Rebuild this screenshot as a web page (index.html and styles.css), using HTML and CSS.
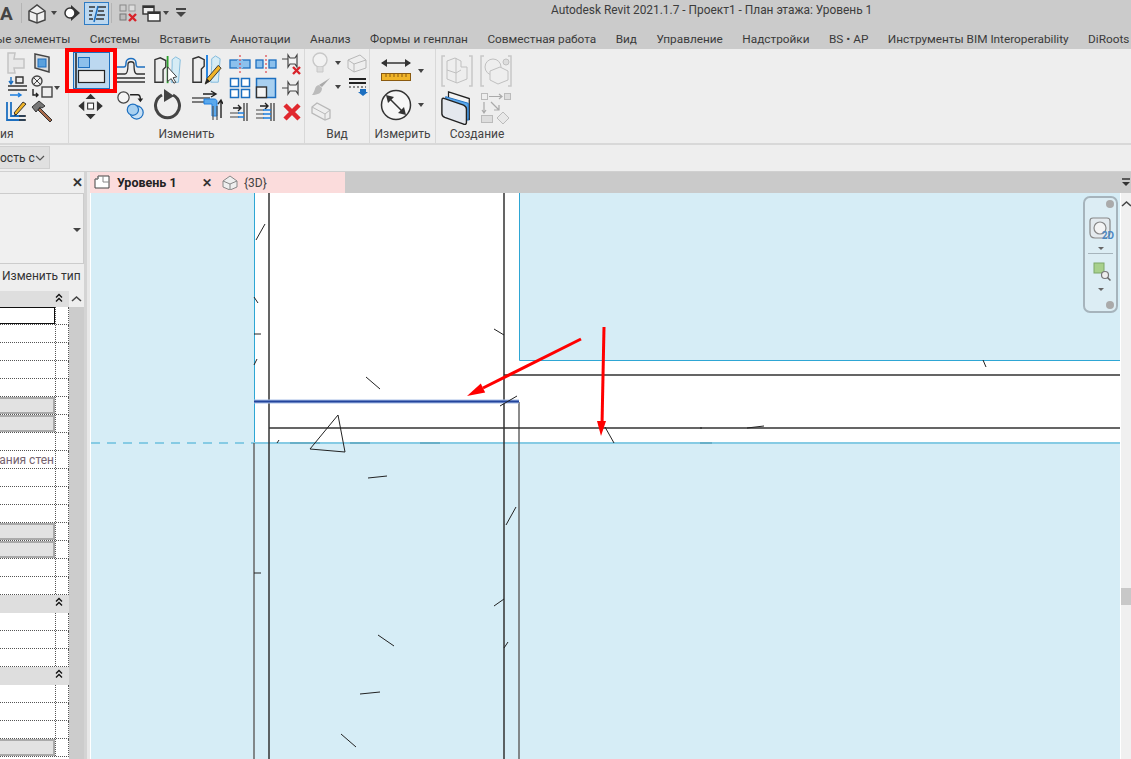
FILE: index.html
```html
<!DOCTYPE html>
<html lang="ru">
<head>
    <meta charset="UTF-8">
    <meta name="viewport" content="width=device-width, initial-scale=1.0">
    <title>Autodesk Revit 2021.1.7 - Проект1 - План этажа: Уровень 1</title>
    <link rel="stylesheet" href="styles.css">
</head>
<body>
    <!-- Title bar -->
    <div class="titlebar">
        <div class="qat">
            <span class="logo">A</span>
            <span class="qat-sep"></span>
            <svg class="qat-home" width="20" height="22" viewBox="0 0 20 22"><path d="M2 9l8-6 8 6v9l-8 3-8-3z" fill="#f0f0f0" stroke="#444" stroke-width="1.5"/><path d="M2 9l8 3 8-3M10 12v9" fill="none" stroke="#444" stroke-width="1.3"/></svg>
            <span class="caret qat-caret"></span>
            <svg class="qat-sync" width="20" height="22" viewBox="0 0 20 22"><path d="M10 3l9 8-9 8z" fill="#333"/><circle cx="9" cy="11" r="5" fill="#fff" stroke="#333" stroke-width="1.5"/></svg>
            <span class="qat-active">
                <svg width="24" height="22" viewBox="0 0 24 22"><path d="M4 4h6M4 8h4M4 12h3M4 16h4M13 4h8M13 8h6M12 12h8M11 16h8" stroke="#333" stroke-width="1.5"/><path d="M13 3l-4 16" stroke="#1c6fc0" stroke-width="1.5"/></svg>
            </span>
            <span class="qat-sep qat-sep-2"></span>
            <svg class="qat-close" width="20" height="20" viewBox="0 0 20 20"><rect x="2" y="2" width="6" height="6" fill="#ccc" stroke="#888"/><rect x="11" y="2" width="6" height="6" fill="#ddd" stroke="#999"/><rect x="2" y="11" width="6" height="6" fill="#bbb" stroke="#777"/><path d="M11 11l7 7M18 11l-7 7" stroke="#d8232a" stroke-width="2.4"/></svg>
            <svg class="qat-windows" width="20" height="20" viewBox="0 0 20 20"><rect x="1" y="3" width="11" height="8" fill="#eee" stroke="#333" stroke-width="1.4"/><rect x="6" y="9" width="12" height="9" fill="#fff" stroke="#333" stroke-width="1.4"/><path d="M1 4h11M6 10h12" stroke="#333" stroke-width="2"/></svg>
            <span class="caret qat-caret-2"></span>
            <svg class="qat-more" width="12" height="12" viewBox="0 0 12 12"><path d="M1 2h10" stroke="#444" stroke-width="2"/><path d="M1 5h10l-5 5z" fill="#444"/></svg>
        </div>
        <span class="app-title">Autodesk Revit 2021.1.7 - Проект1 - План этажа: Уровень 1</span>
    </div>

    <!-- Ribbon tabs -->
    <div class="ribbon-tabs">
        <span class="tab-first">ые элементы</span>
        <span>Системы</span>
        <span>Вставить</span>
        <span>Аннотации</span>
        <span>Анализ</span>
        <span>Формы и генплан</span>
        <span>Совместная работа</span>
        <span>Вид</span>
        <span>Управление</span>
        <span>Надстройки</span>
        <span>BS • AP</span>
        <span>Инструменты BIM Interoperability</span>
        <span>DiRoots</span>
    </div>

    <!-- Ribbon -->
    <div class="ribbon">
        <section class="panel panel-geometry">
            <div class="panel-body tool-grid tool-grid-geometry">
                <svg width="24" height="24" viewBox="0 0 24 24"><path d="M4 2h7l-1 6h10v9H10l1 5H4z" fill="#e8e8e8" stroke="#c4c4c4" stroke-width="1.5"/></svg>
                <svg width="24" height="24" viewBox="0 0 24 24"><path d="M5 3l14 3v15L5 17z" fill="#ddd" stroke="#444" stroke-width="1.5"/><rect x="8" y="8" width="8" height="8" fill="#5aa0dc" stroke="#1c6fc0"/></svg>
                <svg width="24" height="24" viewBox="0 0 24 24"><path d="M7 2v7M5 6l2 3 2-3" fill="none" stroke="#1c6fc0" stroke-width="1.4"/><path d="M12 2h7v6h-7zM4 11h19M4 15h19" fill="none" stroke="#333" stroke-width="1.4"/><path d="M6 20h11M14 18l3 2-3 2" fill="none" stroke="#1c7fe0" stroke-width="1.4"/></svg>
                <svg width="24" height="24" viewBox="0 0 24 24"><circle cx="7" cy="6" r="5" fill="#eee" stroke="#444" stroke-width="1.4"/><path d="M4 3l6 6M10 3l-6 6" stroke="#444"/><rect x="12" y="12" width="10" height="10" fill="#eee" stroke="#444" stroke-width="1.4"/><path d="M3 14v6h5M6 18l2 2-2 2" fill="none" stroke="#222" stroke-width="1.4"/></svg>
                <svg width="24" height="24" viewBox="0 0 24 24"><path d="M3 3v18h18M7 3v14h14" fill="none" stroke="#1c6fc0" stroke-width="1.8"/><path d="M11 17v-3M15 21h7M15 17h7" stroke="#333" stroke-width="1.3"/><path d="M10 14l9-11 3 2-10 11z" fill="#f0b428" stroke="#333"/></svg>
                <svg width="24" height="24" viewBox="0 0 24 24"><path d="M10 9l12 12-2 2L8 11z" fill="#a86a4a" stroke="#333"/><path d="M2 8l7-6 6 5-3 2-2-1-4 5z" fill="#777" stroke="#333"/></svg>
            </div>
            <span class="caret geometry-caret"></span>
            <div class="panel-label">ия</div>
        </section>

        <section class="panel panel-modify">
            <div class="panel-body modify-body">
                <div class="tool-grid big-tools">
                    <svg class="tool-active" width="52" height="45" viewBox="0 0 52 45"><rect x="2" y="2" width="48" height="41" fill="#eee" stroke="#f00" stroke-width="4"/><rect x="8.500" y="4.500" width="36" height="36" fill="#bcd8f0" stroke="#1c6fc0"/><path d="M11 5v35" stroke="#222" stroke-width="1.500"/><rect x="13.500" y="9.500" width="11" height="10" fill="#8cc0ec" stroke="#1c6fc0"/><rect x="13.500" y="22.500" width="26" height="12" fill="#eee" stroke="#222" stroke-width="1.200"/></svg>
                    <svg width="30" height="30" viewBox="0 0 30 30"><path d="M1 12h7c2 0 2-2 2-4 0-6 10-6 10 0 0 2 0 4 2 4h7" fill="none" stroke="#1c6fc0" stroke-width="1.500"/><path d="M1 23h28M1 27h28" stroke="#333" stroke-width="1.300"/><path d="M1 19h8c2 0 3-2 3-10 0-3 6-3 6 0 0 8 1 10 3 10h8" fill="none" stroke="#333" stroke-width="1.300"/></svg>
                    <svg width="29" height="31" viewBox="0 0 32 34"><path d="M1 5l6-2 6 3v7l-3 3v14H1z" fill="#eee" stroke="#333" stroke-width="1.500"/><path d="M20 5v7l-1 18h8l2-25-5-3z" fill="#d6ecf5" stroke="#7cb8dc"/><path d="M15 1v30" stroke="#2ca02c" stroke-width="2"/><path d="M15 13v16l4-3 3 5 2-1-3-5 4-1z" fill="#fff" stroke="#333"/></svg>
                    <svg width="30" height="32" viewBox="0 0 32 34"><path d="M1 5l6-2 6 3v7l-3 3v14H1z" fill="#eee" stroke="#333" stroke-width="1.500"/><path d="M21 5v7l-1 18h8l2-25-5-3z" fill="#d6ecf5" stroke="#7cb8dc"/><path d="M16 1v26" stroke="#1c7fe0" stroke-width="2"/><path d="M14 32l2-6 12-14 3 3-12 14z" fill="#f0b428" stroke="#333"/><path d="M14 32l2-6 3 3z" fill="#222"/></svg>
                    <svg class="tool-move" width="30" height="27" viewBox="0 0 32 32"><rect x="12" y="12" width="7" height="7" fill="#fff" stroke="#333" stroke-width="1.300"/><path d="M15.500 1l6 6h-12zM15.500 31l6-6h-12zM1 15.500l7-6v12zM30 15.500l-7-6v12z" fill="#333"/></svg>
                    <svg width="30" height="30" viewBox="0 0 30 32"><circle cx="7" cy="8" r="6" fill="#f4f4f4" stroke="#444" stroke-width="1.300"/><path d="M14 5h8c2 0 3 2 3 5" fill="none" stroke="#222" stroke-width="1.500"/><path d="M22 9h6l-3 4z" fill="#222"/><circle cx="21" cy="24" r="7" fill="#c8e0f4" stroke="#1c6fc0" stroke-width="1.300"/><circle cx="17" cy="21" r="6" fill="#a8d0f0" stroke="#1c6fc0" stroke-width="1.300"/></svg>
                    <svg width="30" height="32" viewBox="0 0 30 32"><path d="M20 6a12 12 0 1 1-11 0" fill="none" stroke="#444" stroke-width="3"/><path d="M11 0l10 7-10 6z" fill="#444"/></svg>
                    <svg width="32" height="32" viewBox="0 0 32 32"><path d="M1 9h18M1 13h16" stroke="#555" stroke-width="1.300"/><path d="M12 5h12M20 2l5 3-5 3" fill="none" stroke="#222" stroke-width="1.400"/><path d="M13 10h10c2 0 3 1 3 3v14h-5V15h-8z" fill="#5aa8ec" stroke="#1c7fe0"/><path d="M22 17v14M26 31V17" stroke="#555" stroke-width="1.200"/><path d="M30 29V12M27 15l3-4 2 4" fill="none" stroke="#222" stroke-width="1.400"/></svg>
                </div>
                <div class="tool-grid small-tools">
                    <svg width="22" height="22" viewBox="0 0 22 22"><rect x="1" y="7" width="8" height="8" fill="#8cc0ec" stroke="#1c6fc0" stroke-width="1.300"/><rect x="13" y="7" width="8" height="8" fill="#8cc0ec" stroke="#1c6fc0" stroke-width="1.300"/><rect x="8" y="7" width="6" height="8" fill="#8cc0ec"/><path d="M11 2v18" stroke="#d8232a" stroke-dasharray="2 2"/></svg>
                    <svg width="22" height="22" viewBox="0 0 22 22"><rect x="1" y="7" width="7" height="8" fill="#8cc0ec" stroke="#1c6fc0" stroke-width="1.300"/><rect x="14" y="7" width="7" height="8" fill="#8cc0ec" stroke="#1c6fc0" stroke-width="1.300"/><path d="M11 2v18" stroke="#d8232a" stroke-dasharray="2 2"/></svg>
                    <svg width="22" height="22" viewBox="0 0 22 22"><path d="M1 6h6M7 2l2 3h5l2-3v12l-2-3H9l-2 3z" fill="#f4f4f4" stroke="#444" stroke-width="1.200"/><path d="M12 14l7 7M19 14l-7 7" stroke="#d8232a" stroke-width="2.400"/></svg>
                    <svg width="22" height="22" viewBox="0 0 22 22"><rect x="1.500" y="1.500" width="8" height="8" fill="#fff" stroke="#1c6fc0" stroke-width="1.500"/><rect x="12.500" y="1.500" width="8" height="8" fill="#fff" stroke="#1c6fc0" stroke-width="1.500"/><rect x="1.500" y="12.500" width="8" height="8" fill="#fff" stroke="#1c6fc0" stroke-width="1.500"/><rect x="12.500" y="12.500" width="8" height="8" fill="#fff" stroke="#1c6fc0" stroke-width="1.500"/></svg>
                    <svg width="22" height="22" viewBox="0 0 22 22"><rect x="1.500" y="1.500" width="19" height="19" fill="#a8d0f0" stroke="#1c6fc0" stroke-width="1.500"/><rect x="1.500" y="10" width="10" height="10.500" fill="#f4f4f4" stroke="#333" stroke-width="1.400"/></svg>
                    <svg width="22" height="22" viewBox="0 0 22 22"><path d="M1 11h6M7 5l2 3h6l2-3v12l-2-3H9l-2 3z" fill="#f4f4f4" stroke="#444" stroke-width="1.200"/></svg>
                    <svg width="22" height="22" viewBox="0 0 22 22"><path d="M18 2v18M15 2v18" stroke="#333" stroke-width="1.200"/><path d="M4 7h8M9 4l3 3-3 3" fill="none" stroke="#222" stroke-width="1.400"/><path d="M1 12h9M1 16h9" stroke="#444"/><path d="M9 12h6M9 16h6" stroke="#1c7fe0" stroke-width="1.500"/></svg>
                    <svg width="22" height="22" viewBox="0 0 22 22"><path d="M19 2v18M16 2v18" stroke="#333" stroke-width="1.200"/><path d="M5 5h8M10 2l3 3-3 3" fill="none" stroke="#222" stroke-width="1.400"/><path d="M1 9h8M1 13h8M1 17h8" stroke="#444"/><path d="M8 9h8M8 13h8M8 17h8" stroke="#1c7fe0" stroke-width="1.500"/></svg>
                    <svg width="22" height="22" viewBox="0 0 22 22"><path d="M4 4l14 14M18 4L4 18" stroke="#e0282e" stroke-width="4.500"/></svg>
                </div>
            </div>
            <div class="panel-label">Изменить</div>
        </section>

        <section class="panel panel-view">
            <div class="panel-body tool-grid tool-grid-view">
                <svg width="22" height="24" viewBox="0 0 22 24"><circle cx="10" cy="9" r="7" fill="#f2f2f2" stroke="#c8c8c8" stroke-width="1.400"/><path d="M7 16v5h6v-5" fill="#ddd" stroke="#c8c8c8"/></svg>
                <span class="caret caret-faded"></span>
                <svg width="22" height="20" viewBox="0 0 22 20"><path d="M2 7l12-5 6 5v8l-12 4-6-4z" fill="#eee" stroke="#b8b8b8"/><path d="M2 7l6 4 12-4M8 11v8" fill="none" stroke="#b8b8b8"/></svg>
                <svg width="22" height="20" viewBox="0 0 22 20"><path d="M20 1l-8 9-3-2z" fill="#aaa"/><path d="M9 8c-5 1-3 5-7 10 6 0 10-2 10-7z" fill="#bbb"/></svg>
                <span class="caret caret-faded"></span>
                <svg width="22" height="20" viewBox="0 0 22 20"><path d="M3 2h17M3 6h17" stroke="#222" stroke-width="2"/><path d="M3 10h17" stroke="#222" stroke-dasharray="2 2"/><path d="M14 12h6v3h2l-5 4-5-4h2z" fill="#1c6fc0"/></svg>
                <svg width="22" height="20" viewBox="0 0 22 20"><path d="M2 6l5-4 13 7v8l-5 2L2 12z" fill="#eee" stroke="#b8b8b8" stroke-width="1.300"/><path d="M2 6l13 7v6M15 13l5-4" fill="none" stroke="#b8b8b8"/></svg>
            </div>
            <div class="panel-label">Вид</div>
        </section>

        <section class="panel panel-measure">
            <div class="panel-body measure-body">
                <div class="measure-row">
                    <svg width="32" height="26" viewBox="0 0 32 26"><path d="M2 5h28" stroke="#333" stroke-width="1.500"/><path d="M1 5l6-4v8zM31 5l-6-4v8z" fill="#333"/><rect x="1.500" y="15.500" width="29" height="7" fill="#f0b428" stroke="#8a5a10"/><path d="M6 16v3M10 16v3M14 16v3M18 16v3M22 16v3M26 16v3" stroke="#8a5a10"/></svg>
                    <span class="caret"></span>
                </div>
                <div class="measure-row">
                    <svg width="32" height="32" viewBox="0 0 32 32"><circle cx="16" cy="16" r="14.500" fill="#f6f6f6" stroke="#333" stroke-width="1.500"/><path d="M9 9l14 14" stroke="#333" stroke-width="1.500"/><path d="M6 6l8 2-6 6zM26 26l-8-2 6-6z" fill="#333"/></svg>
                    <span class="caret"></span>
                </div>
            </div>
            <div class="panel-label">Измерить</div>
        </section>

        <section class="panel panel-create">
            <div class="panel-body create-body">
                <svg width="32" height="32" viewBox="0 0 32 32"><path d="M4 1H1v30h3M28 1h3v30h-3" fill="none" stroke="#c8c8c8" stroke-width="1.500"/><path d="M6 6l8-3 6 3v6h6v12l-10 4-10-4z" fill="#eee" stroke="#c0c0c0"/><path d="M6 15l9 3 5-3M15 3v15M15 18v10" fill="none" stroke="#c0c0c0"/></svg>
                <svg width="32" height="32" viewBox="0 0 32 32"><path d="M4 1H1v30h3M28 1h3v30h-3" fill="none" stroke="#c8c8c8" stroke-width="1.500"/><circle cx="13" cy="12" r="8" fill="#eee" stroke="#c0c0c0"/><path d="M10 16l10-4 8 4v9l-10 4-8-4z" fill="#eee" stroke="#c0c0c0"/><circle cx="26" cy="7" r="3" fill="#ddd" stroke="#c0c0c0"/></svg>
                <svg width="34" height="34" viewBox="0 0 36 36"><path d="M9 1l22 7v22L9 24z" fill="#f4f4f4" stroke="#222" stroke-width="1.300"/><path d="M6 6l24 7v18L6 24z" fill="#5aa8ec" stroke="#1c6fc0"/><path d="M2 10c0-2 1-3 3-2l20 7c2 1 3 2 3 4v14c0 2-1 3-3 2L5 28c-2-1-3-2-3-4z" fill="#e4e8ee" stroke="#222" stroke-width="1.500"/></svg>
                <svg width="32" height="32" viewBox="0 0 32 32"><rect x="1.500" y="1.500" width="6" height="6" fill="#eee" stroke="#bbb"/><rect x="24.500" y="1.500" width="6" height="6" fill="#ddd" stroke="#bbb"/><path d="M9 4.500h13M19 2l3 2.500-3 2.500M4 10v11M2 18l2 3 2-3M11 10l8 8M14 18h5v-5" fill="none" stroke="#aaa" stroke-width="1.200"/><rect x="1.500" y="23.500" width="11" height="7" fill="#ddd" stroke="#bbb"/><path d="M23 20l6 6-6 6-6-6z" fill="#e8e8e8" stroke="#bbb"/></svg>
            </div>
            <div class="panel-label">Создание</div>
        </section>
    </div>

    <!-- Options bar -->
    <div class="options-bar">
        <div class="combo">
            <span class="combo-text">ость с</span>
            <svg width="10" height="6" viewBox="0 0 10 6"><path d="M1 1l4 4 4-4" fill="none" stroke="#555" stroke-width="1.200"/></svg>
        </div>
    </div>

    <!-- Properties and view -->
    <div class="workspace">
        <aside class="props">
            <div class="props-head"><span class="close">✕</span></div>
            <div class="type-box"><span class="type-arrow"></span></div>
            <div class="edit-type">Изменить тип</div>
            <div class="props-body">
                <div class="props-table">
                    <div class="row row-group"><svg class="chevrons" width="8" height="10" viewBox="0 0 8 10"><path d="M1 4.500l3-3 3 3M1 8.500l3-3 3 3" fill="none" stroke="#111" stroke-width="1.300"/></svg></div>
                    <div class="row"><span class="cell cell-focus"></span></div>
                    <div class="row"></div>
                    <div class="row"></div>
                    <div class="row"></div>
                    <div class="row"></div>
                    <div class="row"><span class="cell cell-ro"></span></div>
                    <div class="row"><span class="cell cell-ro"></span></div>
                    <div class="row"></div>
                    <div class="row"><span class="cell-text">ания стен</span></div>
                    <div class="row"></div>
                    <div class="row"></div>
                    <div class="row"></div>
                    <div class="row"><span class="cell cell-ro"></span></div>
                    <div class="row"><span class="cell cell-ro"></span></div>
                    <div class="row"></div>
                    <div class="row"></div>
                    <div class="row row-group"><svg class="chevrons" width="8" height="10" viewBox="0 0 8 10"><path d="M1 4.500l3-3 3 3M1 8.500l3-3 3 3" fill="none" stroke="#111" stroke-width="1.300"/></svg></div>
                    <div class="row"></div>
                    <div class="row"></div>
                    <div class="row"></div>
                    <div class="row row-group"><svg class="chevrons" width="8" height="10" viewBox="0 0 8 10"><path d="M1 4.500l3-3 3 3M1 8.500l3-3 3 3" fill="none" stroke="#111" stroke-width="1.300"/></svg></div>
                    <div class="row"></div>
                    <div class="row"></div>
                    <div class="row"></div>
                    <div class="row"><span class="cell cell-ro"></span></div>
                </div>
                <div class="props-scroll">
                    <svg width="15" height="16" viewBox="0 0 15 16"><path d="M3 10l4.500-4 4.500 4" fill="none" stroke="#444" stroke-width="1.600"/></svg>
                </div>
            </div>
        </aside>
        <div class="splitter"></div>
        <main class="view-area">
            <div class="doc-tabs">
                <div class="doc-tabs-pink">
                    <svg width="16" height="15" viewBox="0 0 16 15"><path d="M4 1h11v12H1V4h3z" fill="#fff" stroke="#444"/><path d="M4 1v3H1M9 1v6h6" fill="none" stroke="#888"/></svg>
                    <span class="doc-tab-name">Уровень 1</span>
                    <span class="doc-close">✕</span>
                    <svg width="16" height="15" viewBox="0 0 16 15"><path d="M1 6l7-5 7 5v6l-7 3-7-3z" fill="#eee" stroke="#888"/><path d="M1 6l7 3 7-3M8 9v6" fill="none" stroke="#888"/></svg>
                    <span class="doc-tab-3d">{3D}</span>
                </div>
                <svg class="doc-more" width="8" height="10" viewBox="0 0 8 10"><path d="M0 1h8" stroke="#333" stroke-width="1.500"/><path d="M0 4h8L4 8z" fill="#333"/></svg>
            </div>
            <div class="view-body">
                <div class="canvas">
                    <svg class="drawing" width="1029" height="566" viewBox="91 193 1029 566">
                        <rect x="91" y="193" width="1029" height="566" fill="#fff"/>
                        <rect x="91" y="193" width="163" height="250" fill="#d6edf6"/>
                        <rect x="519" y="193" width="601" height="167" fill="#d6edf6"/>
                        <rect x="91" y="443" width="1029" height="316" fill="#d6edf6"/>
                        <path d="M254.500 193v250M519.500 193v167.500H1120" fill="none" stroke="#2ea6d4"/>
                        <path d="M91 443h163" stroke="#86cbe4" stroke-width="2" stroke-dasharray="9 7"/>
                        <path d="M254 443h866" stroke="#86cbe4" stroke-width="2"/>
                        <path d="M290 443h30M350 443h20M420 443h20M700 443h12" stroke="#4a94ac"/>
                        <path d="M254 443v316M519 402v357" stroke="#666" stroke-width="1.500"/>
                        <path d="M269 193v566M504 193v566M504 375h616M269 428h851" stroke="#333" stroke-width="1.500"/>
                        <path d="M254 401.500h265" stroke="#a9bfe8" stroke-width="4"/>
                        <path d="M254 401.500h265" stroke="#23459c" stroke-width="2"/>
                        <path d="M338 415l-28 34 35 3z" fill="none" stroke="#222"/>
                        <path d="M265 224l-9 16M254 297l4 6M254 334h7M254 365l3-6M494 329l10 6M366 377l14 12M500 406l17-10M368 478l19-2M516 507l-10 18M254 573h7M494 606l10-7M378 635l16 11M504 648l4-6M360 694l20-2M341 734l15 13M605 427l9 16M983 360l3 7M747 428l17-2M277 443l2-3M700 428h2" fill="none" stroke="#222"/>
                        <path d="M581 339L483 388" stroke="#f00" stroke-width="3"/>
                        <path d="M467 396L480.800 383.500L485.200 392.500z" fill="#f00"/>
                        <path d="M604 327l-2 98" stroke="#f00" stroke-width="3"/>
                        <path d="M601 436l-4-15h9z" fill="#f00"/>
                    </svg>
                    <div class="nav-bar">
                        <span class="nav-btn"></span>
                        <svg class="nav-wheel" width="30" height="26" viewBox="0 0 30 26"><path d="M5 2h14c2 0 3 1 3 3v12c0 3-3 5-6 5H7c-3 0-5-2-5-5V5c0-2 1-3 3-3z" fill="#e4eaee" stroke="#888" stroke-width="1.200"/><circle cx="12" cy="12" r="6" fill="#f4f4f4" stroke="#888" stroke-width="1.200"/></svg>
                        <span class="nav-2d">2D</span>
                        <span class="nav-caret"></span>
                        <span class="nav-line"></span>
                        <svg class="nav-zoom" width="20" height="20" viewBox="0 0 20 20"><rect x="1" y="1" width="10" height="10" fill="#a8d08c" stroke="#7ca868"/><circle cx="12" cy="13" r="3.500" fill="#eee" stroke="#777" stroke-width="1.200"/><path d="M14.500 15.500l3 3" stroke="#666" stroke-width="1.500"/></svg>
                        <span class="nav-caret nav-caret-2"></span>
                        <span class="nav-btn nav-btn-min"></span>
                    </div>
                </div>
                <div class="view-scroll">
                    <svg width="12" height="12" viewBox="0 0 12 12"><path d="M1 8l4.500-4L10 8" fill="none" stroke="#444" stroke-width="1.500"/></svg>
                    <span class="view-thumb"></span>
                </div>
            </div>
        </main>
    </div>
</body>
</html>
```

FILE: styles.css
```css
* {
    box-sizing: border-box;
}

html, body {
    margin: 0;
    height: 100%;
    overflow: hidden;
}

body {
    width: 1131px;
    height: 759px;
    background-color: #eee;
    font-family: Roboto, "Liberation Sans", sans-serif;
    font-size: 12px;
    color: #333;
}

svg {
    display: block;
    flex: none;
}

.caret {
    display: block;
    width: 0;
    height: 0;
    border-left: 3.5px solid transparent;
    border-right: 3.5px solid transparent;
    border-top: 4px solid #444;
}

/* title bar */
.titlebar {
    display: flex;
    align-items: center;
    height: 26px;
    background-color: #cbcbcb;
}

.qat {
    display: flex;
    align-items: center;
    width: 551px;
    flex: none;
}

.logo {
    width: 12px;
    font-size: 19px;
    font-weight: bold;
    color: #444;
    text-align: right;
}

.qat-sep {
    width: 1px;
    height: 20px;
    margin-left: 9px;
    background-color: #b4b4b4;
}

.qat-home {
    margin-left: 5px;
}

.qat-caret {
    margin-left: 3.5px;
}

.qat-sync {
    margin-left: 4.5px;
}

.qat-active {
    display: block;
    width: 25px;
    height: 23px;
    margin-left: 3px;
    background-color: #bcd8f0;
    border: 1px solid #2f7cc4;
}

.qat-sep-2 {
    margin-left: 2px;
}

.qat-close {
    margin-left: 6px;
}

.qat-windows {
    margin-left: 4px;
}

.qat-caret-2 {
    margin-left: 0.5px;
}

.qat-more {
    margin-left: 6.5px;
}

.app-title {
    margin-bottom: 7px;
    font-size: 11.9px;
    color: #3c3c3c;
    white-space: nowrap;
}

/* ribbon */
.ribbon-tabs {
    display: flex;
    align-items: center;
    gap: 19.5px;
    height: 23px;
    padding-top: 2px;
    background-color: #cbcbcb;
    font-size: 11.8px;
    white-space: nowrap;
    color: #3a3a3a;
    overflow: hidden;
}

.tab-first {
    margin-left: -4px;
}

.ribbon {
    display: flex;
    height: 96px;
    background-color: #eee;
    border-bottom: 2px solid #d8d8d8;
}

.panel {
    position: relative;
    display: flex;
    flex-direction: column;
    flex: none;
    border-right: 1px solid #d8d8d8;
}

.panel-body {
    height: 73px;
    flex: none;
}

.panel-label {
    height: 21px;
    line-height: 24px;
    text-align: center;
    font-size: 12px;
    color: #444;
}

.tool-grid {
    display: grid;
    justify-items: center;
    align-items: center;
}

.panel-geometry {
    width: 69px;
}

.panel-geometry .panel-label {
    text-align: left;
}

.tool-grid-geometry {
    grid-template-columns: 26px 26px;
    grid-auto-rows: 24px;
    padding: 2px 0 0 3px;
}

.geometry-caret {
    position: absolute;
    top: 37px;
    left: 54px;
}

.panel-modify {
    width: 236px;
}

.modify-body {
    display: flex;
}

.big-tools {
    grid-template-columns: 51px 29px 46px 32px;
    grid-template-rows: 44px 26px;
    width: 158px;
    height: 70px;
    margin: -1px 0 0 -4px;
}

.tool-move {
    margin-top: 2px;
}

.small-tools {
    grid-template-columns: 26px 26px 26px;
    grid-auto-rows: 24px;
    padding-top: 3px;
    margin-left: 4px;
}

.panel-view {
    width: 65px;
}

.tool-grid-view {
    grid-template-columns: 22px 12px 26px;
    grid-auto-rows: 24px;
    padding: 2px 0 0 5px;
}

.panel-measure {
    width: 66px;
}

.measure-body {
    padding: 5px 0 0 10px;
}

.measure-row {
    display: flex;
    align-items: center;
    gap: 6px;
    height: 34px;
}

.panel-create {
    width: 82px;
    border-right: none;
}

.create-body {
    display: grid;
    grid-template-columns: 36px 36px;
    column-gap: 3px;
    grid-auto-rows: 37px;
    justify-items: center;
    align-items: center;
    padding: 3px 0 0 3px;
}

/* options */
.options-bar {
    height: 26px;
    padding-top: 1px;
    background-color: #eee;
}

.combo {
    display: flex;
    align-items: center;
    justify-content: space-between;
    width: 50px;
    height: 23px;
    padding-right: 6px;
    background-color: #e0e0e0;
    border: 1px solid #d0d0d0;
    border-left: none;
    overflow: hidden;
    font-size: 12px;
    white-space: nowrap;
}

/* workspace */
.workspace {
    display: flex;
    height: 588px;
    border-top: 1px solid #d0d0d0;
}

.props {
    width: 84px;
    flex: none;
    background-color: #eee;
}

.props-head {
    height: 21px;
    text-align: right;
    padding-right: 1px;
}

.close {
    font-size: 13px;
    font-weight: bold;
    line-height: 21px;
    color: #333;
}

.type-box {
    position: relative;
    height: 71px;
    border: 1px solid #ccc;
    border-left: none;
    background-color: #f0f0f0;
}

.type-arrow {
    position: absolute;
    top: 34px;
    right: 2px;
    border-left: 4px solid transparent;
    border-right: 4px solid transparent;
    border-top: 4px solid #444;
}

.edit-type {
    height: 27px;
    padding-left: 2px;
    line-height: 24px;
    font-size: 12px;
    white-space: nowrap;
}

.props-body {
    display: flex;
    background-color: #fff;
}

.props-table {
    width: 69px;
    flex: none;
}

.row {
    position: relative;
    height: 18px;
    background-color: #fff;
    border-bottom: 1px dotted #555;
    border-right: 1px dotted #555;
}

.row::after {
    content: "";
    position: absolute;
    top: 0;
    bottom: 0;
    left: 55px;
    border-left: 1px dotted #555;
}

.row-group {
    background-color: #dedede;
    border: none;
}

.row-group::after {
    display: none;
}

.props-table .row:first-child {
    height: 16px;
}

.chevrons {
    position: absolute;
    top: 2px;
    left: 55px;
}

.cell {
    display: block;
    width: 55px;
    height: 17px;
}

.cell-focus {
    background-color: #fff;
    border: 1px solid #111;
    border-left: none;
}

.cell-ro {
    background-color: #e2e2e2;
    border: 2px solid #aaa;
    border-left: none;
}

.cell-text {
    position: absolute;
    right: 14px;
    top: 1px;
    line-height: 17px;
    font-size: 12px;
    color: #75636f;
    white-space: nowrap;
}

.props-scroll {
    width: 15px;
    height: 480px;
    background-color: #ccc;
}

.props-scroll svg {
    background-color: #eee;
}

.splitter {
    width: 6px;
    flex: none;
    background-color: #e8e8e8;
    border-left: 3px solid #d4d4d4;
}

.view-area {
    flex: 1;
    min-width: 0;
}

.doc-tabs {
    display: flex;
    align-items: center;
    justify-content: space-between;
    height: 21px;
    background-color: #cacaca;
    padding-right: 1px;
}

.doc-tabs-pink {
    display: flex;
    align-items: center;
    width: 255px;
    height: 100%;
    padding-left: 4px;
    background-color: #fbdcdc;
}

.doc-tab-name {
    margin-left: 7px;
    width: 85px;
    font-size: 12.5px;
    font-weight: bold;
    color: #222;
}

.doc-close {
    width: 20px;
    font-size: 12px;
    font-weight: bold;
    color: #333;
}

.doc-tab-3d {
    margin-left: 6px;
    color: #444;
}

.view-body {
    display: flex;
    height: 566px;
    padding-left: 1px;
    background-color: #fff;
}

.canvas {
    position: relative;
    width: 1029px;
    flex: none;
}

.drawing {
    display: block;
}

.nav-bar {
    position: absolute;
    top: 3px;
    right: 2px;
    width: 35px;
    height: 117px;
    background-color: #dcedf4;
    border: 2px solid #a6b4bc;
    border-radius: 7px;
}

.nav-btn {
    position: absolute;
    top: 2px;
    right: 2px;
    width: 8px;
    height: 8px;
    border-radius: 50%;
    background-color: #aaa;
}

.nav-btn-min {
    top: auto;
    bottom: 2px;
}

.nav-wheel {
    position: absolute;
    top: 18px;
    left: 3px;
}

.nav-2d {
    position: absolute;
    top: 32px;
    right: 2px;
    font-size: 10px;
    font-weight: bold;
    color: #4c88c4;
}

.nav-caret {
    position: absolute;
    top: 49px;
    left: 13px;
    border-left: 3px solid transparent;
    border-right: 3px solid transparent;
    border-top: 3px solid #666;
}

.nav-caret-2 {
    top: 90px;
}

.nav-line {
    position: absolute;
    top: 55px;
    left: 3px;
    width: 25px;
    height: 1px;
    background-color: #a6b4bc;
}

.nav-zoom {
    position: absolute;
    top: 64px;
    left: 8px;
}

.view-scroll {
    position: relative;
    flex: 1;
    padding-top: 5px;
    background-color: #f0f0f0;
    border-left: 1px solid #fff;
}

.view-thumb {
    position: absolute;
    top: 395px;
    left: 0;
    right: 0;
    height: 17px;
    background-color: #c8c8c8;
}
```
